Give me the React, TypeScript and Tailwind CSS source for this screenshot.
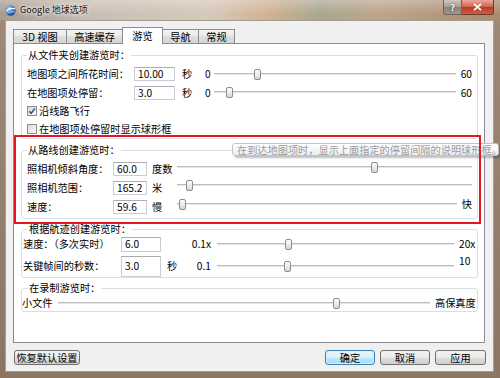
import React from "react";

const font = "font-['Noto_Sans_CJK_SC','Noto_Sans',sans-serif]";

function Slider({ thumb, className = "" }: { thumb: number; className?: string }) {
  return (
    <div className={"relative h-[13px] min-w-0 flex-1 " + className}>
      <div className="absolute inset-x-0 top-[5px] h-[2px] border-t border-[#bcbcbc] bg-[#e6e6e6]" />
      <div
        className="absolute top-[1px] h-[11px] w-[7px] rounded-[2px] border border-[#8d8d8d] bg-[linear-gradient(to_bottom,#fdfdfd,#ececec_50%,#d6d6d6)]"
        style={{ left: thumb - 3 }}
      />
    </div>
  );
}

function Box({ v, className = "" }: { v: string; className?: string }) {
  return (
    <div
      className={
        "flex shrink-0 items-center border border-[#c9ccd2] border-t-[#abadb3] bg-white pl-[3px] " + className
      }
    >
      {v}
    </div>
  );
}

function Check({ checked }: { checked?: boolean }) {
  return (
    <div className="flex h-[10px] w-[10px] shrink-0 items-center justify-center border border-[#8e8f8f] bg-[linear-gradient(135deg,#d8d8d8,#fbfbfb)]">
      {checked && (
        <svg width="8" height="8" viewBox="0 0 8 8">
          <path d="M1.2 4.2 L3.2 6.3 L6.9 1.4" stroke="#3b4f8a" strokeWidth="1.5" fill="none" />
        </svg>
      )}
    </div>
  );
}

function Tab({ label, w, selected }: { label: string; w: string; selected?: boolean }) {
  if (selected)
    return (
      <div
        className={
          "relative z-10 -mb-[1px] -ml-[1px] flex h-[17px] items-center justify-center border border-b-0 border-[#898c95] bg-white " +
          w
        }
      >
        {label}
      </div>
    );
  return (
    <div
      className={
        "-ml-[1px] flex h-[14px] items-center justify-center border border-b-0 border-[#898c95] bg-[linear-gradient(to_bottom,#f3f3f3,#ebebeb_50%,#dedede_50%,#d6d6d6)] first:ml-0 " +
        w
      }
    >
      {label}
    </div>
  );
}

function Btn({ children, primary, className = "" }: { children: React.ReactNode; primary?: boolean; className?: string }) {
  return (
    <div
      className={
        "flex h-[15px] items-center justify-center rounded-[3px] border " +
        (primary
          ? "border-[#3c7fb1] bg-[linear-gradient(to_bottom,#eaf6fd,#d9f0fc_50%,#bee6fd_50%,#a7d9f5)] shadow-[inset_0_0_0_1px_#d6f0fc] "
          : "border-[#707070] bg-[linear-gradient(to_bottom,#f2f2f2,#ebebeb_50%,#dddddd_50%,#cfcfcf)] ") +
        className
      }
    >
      {children}
    </div>
  );
}

export default function App() {
  return (
    <div
      className={
        "relative flex h-[378px] w-[500px] flex-col overflow-hidden text-[10.2px] leading-[14px] text-black bg-[linear-gradient(to_bottom,#9e8a76,#8a7663)] " +
        font
      }
    >
      {/* title bar */}
      <div className="flex h-[20px] shrink-0 items-center bg-[linear-gradient(to_bottom,rgba(255,255,255,0.28),rgba(255,255,255,0)_70%),linear-gradient(to_right,#a89c90_0%,#c9beb2_18%,#d6c9ba_42%,#cfb193_54%,#a8a790_64%,#bda48a_76%,#a98b6f_100%)] pl-[5px]">
        <svg width="11" height="11" viewBox="0 0 12 12" className="shrink-0">
          <defs>
            <radialGradient id="g" cx="0.35" cy="0.3" r="0.8">
              <stop offset="0" stopColor="#9fd0ff" />
              <stop offset="0.6" stopColor="#2f6fc4" />
              <stop offset="1" stopColor="#173f80" />
            </radialGradient>
          </defs>
          <circle cx="6" cy="6" r="5.6" fill="url(#g)" />
          <path d="M1.2 7.2 C3.5 4.2 7.5 3.2 11 4.4" stroke="#ffffff" strokeWidth="1.3" fill="none" />
          <path d="M2 9.3 C4.5 7.5 8 7 10.6 7.6" stroke="#dfe9f3" strokeWidth="0.8" fill="none" />
        </svg>
        <span className="ml-[4px] text-[9px] leading-[12px] text-[#111] [text-shadow:0_0_5px_#fff,0_0_3px_#fff]">
          Google 地球选项
        </span>
        <div className="ml-auto mr-[6px] flex self-start">
          <div className="flex h-[15px] w-[19px] items-center justify-center rounded-bl-[3px] border border-t-0 border-[#6e6257] bg-[linear-gradient(to_bottom,#cfc6bd,#a99c90_50%,#8d7f73_50%,#a1958a)] text-[9px] font-bold leading-none text-white [text-shadow:0_0_2px_#333]">
            ?
          </div>
          <div className="flex h-[15px] w-[32px] items-center justify-center rounded-br-[3px] border border-l-0 border-t-0 border-[#6f3a30] bg-[linear-gradient(to_bottom,#e9a99b,#d0604b_50%,#b73a23_50%,#cf5c43)]">
            <svg width="9" height="8" viewBox="0 0 9 8">
              <path d="M1 0.8 L8 7.2 M8 0.8 L1 7.2" stroke="#ffffff" strokeWidth="1.8" />
            </svg>
          </div>
        </div>
      </div>

      {/* client area */}
      <div className="mb-[6px] ml-[5px] mr-[6px] flex flex-1 flex-col border border-[#a69d93] bg-[#f0f0f0] pl-[7px] pr-[7px] pt-[6px]">
        {/* tabs */}
        <div className="relative z-10 flex h-[16px] items-end">
          <Tab label="3D 视图" w="w-[54px]" />
          <Tab label="高速缓存" w="w-[57px]" />
          <Tab label="游览" w="w-[41px]" selected />
          <Tab label="导航" w="w-[37px]" />
          <Tab label="常规" w="w-[37px]" />
        </div>

        {/* panel */}
        <div className="flex h-[300px] w-[472px] flex-col border border-[#898c95] bg-white pl-[7px] pr-[6px] pt-[4px]">
          {/* group 1 */}
          <fieldset className="rounded-[3px] border border-[#d5dfe5] pb-[1px] pl-[5px] pr-[5px] pt-[3px]">
            <legend className="h-[14px] px-[1px] leading-[14px]">从文件夹创建游览时：</legend>
            <div className="flex h-[18px] items-center whitespace-nowrap">
              <span className="w-[107px] shrink-0">地图项之间所花时间：</span>
              <Box v="10.00" className="h-[14px] w-[41px]" />
              <span className="ml-[7px] w-[11px] shrink-0">秒</span>
              <span className="ml-[12px] w-[6px] shrink-0">0</span>
              <Slider thumb={43} className="ml-[3px]" />
              <span className="ml-[5px] shrink-0">60</span>
            </div>
            <div className="flex h-[19px] items-center whitespace-nowrap">
              <span className="w-[107px] shrink-0">在地图项处停留：</span>
              <Box v="3.0" className="h-[14px] w-[41px]" />
              <span className="ml-[7px] w-[11px] shrink-0">秒</span>
              <span className="ml-[12px] w-[6px] shrink-0">0</span>
              <Slider thumb={15} className="ml-[3px]" />
              <span className="ml-[5px] shrink-0">60</span>
            </div>
            <div className="flex h-[18px] items-center">
              <Check checked />
              <span className="ml-[2px]">沿线路飞行</span>
            </div>
            <div className="flex h-[17px] items-center">
              <Check />
              <span className="ml-[2px]">在地图项处停留时显示球形框</span>
            </div>
          </fieldset>

          {/* group 2 */}
          <fieldset className="mt-[4px] rounded-[3px] border border-[#d5dfe5] pb-[2px] pl-[5px] pr-[5px] pt-[3px]">
            <legend className="h-[14px] px-[1px] leading-[14px]">从路线创建游览时：</legend>
            <div className="flex h-[18px] items-center whitespace-nowrap">
              <span className="w-[86px] shrink-0">照相机倾斜角度：</span>
              <Box v="60.0" className="h-[14px] w-[34px]" />
              <span className="ml-[5px] w-[25px] shrink-0">度数</span>
              <Slider thumb={197} className="mb-[4px]" />
            </div>
            <div className="flex h-[19px] items-center whitespace-nowrap">
              <span className="w-[86px] shrink-0">照相机范围：</span>
              <Box v="165.2" className="h-[14px] w-[34px]" />
              <span className="ml-[5px] w-[25px] shrink-0">米</span>
              <Slider thumb={12} className="mb-[4px]" />
            </div>
            <div className="flex h-[19px] items-center whitespace-nowrap">
              <span className="w-[86px] shrink-0">速度：</span>
              <Box v="59.6" className="h-[14px] w-[34px]" />
              <span className="ml-[5px] w-[25px] shrink-0">慢</span>
              <Slider thumb={5} className="mb-[4px]" />
              <span className="mb-[6px] ml-[5px] shrink-0">快</span>
            </div>
          </fieldset>

          {/* group 3 */}
          <fieldset className="mt-[3px] rounded-[3px] border border-[#d5dfe5] pl-[1px] pr-[1px]">
            <legend className="ml-[5px] h-[14px] px-[1px] leading-[14px]">根据航迹创建游览时：</legend>
            <div className="flex h-[16px] items-center whitespace-nowrap">
              <span className="w-[98px] shrink-0">速度：（多次实时）</span>
              <Box v="6.0" className="h-[15px] w-[40px]" />
              <span className="w-[28px] shrink-0" />
              <span className="w-[22px] shrink-0 text-right">0.1x</span>
              <Slider thumb={71} className="ml-[6px]" />
              <span className="ml-[5px] w-[17px] shrink-0">20x</span>
            </div>
            <div className="mt-[3px] flex h-[22px] items-center whitespace-nowrap">
              <span className="w-[98px] shrink-0">关键帧间的秒数：</span>
              <Box v="3.0" className="h-[21px] w-[40px]" />
              <span className="w-[28px] shrink-0 pl-[6px]">秒</span>
              <span className="w-[22px] shrink-0 text-right">0.1</span>
              <Slider thumb={70} className="ml-[6px]" />
              <span className="mb-[10px] ml-[5px] w-[17px] shrink-0">10</span>
            </div>
          </fieldset>

          {/* group 4 */}
          <fieldset className="mt-[3px] rounded-[3px] border border-[#d5dfe5] pr-[1px]">
            <legend className="ml-[6px] h-[14px] px-[1px] leading-[14px]">在录制游览时：</legend>
            <div className="flex h-[16px] items-center whitespace-nowrap">
              <span className="w-[33px] shrink-0">小文件</span>
              <Slider thumb={278} className="ml-[3px]" />
              <span className="ml-[5px] w-[41px] shrink-0">高保真度</span>
            </div>
          </fieldset>
        </div>

        {/* buttons */}
        <div className="mt-[7px] flex items-start">
          <Btn className="ml-[1px] w-[66px] rounded-[2px]">恢复默认设置</Btn>
          <div className="ml-auto flex gap-[5px]">
            <Btn primary className="w-[50px]">确定</Btn>
            <Btn className="w-[50px]">取消</Btn>
            <Btn className="w-[51px]">应用</Btn>
          </div>
        </div>
      </div>

      {/* tooltip overlay */}
      <div className="absolute left-[232px] top-[143px] flex h-[13px] w-[267px] items-center whitespace-nowrap rounded-[3px] border border-[#c4c4c4] bg-[linear-gradient(to_bottom,#ffffff,#eceef2)] pl-[4px] text-[#9a9a9a] leading-[11px] shadow-[2px_2px_2px_rgba(0,0,0,0.25)]">
        在到达地图项时，显示上面指定的停留间隔的说明球形框。
      </div>

      {/* red annotation box */}
      <div className="pointer-events-none absolute left-[14px] top-[135px] h-[89px] w-[467px] border-2 border-[#e3171e]" />
    </div>
  );
}
